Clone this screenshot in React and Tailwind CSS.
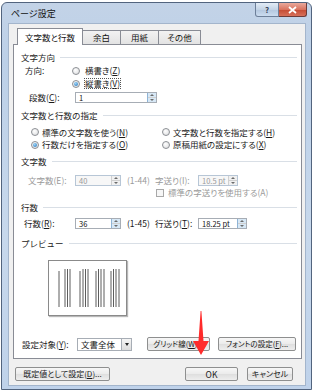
import React from "react";

const Radio = ({ checked }) => (
  <span className="w-[8px] h-[8px] rounded-full border border-[#8c8f94] bg-[radial-gradient(circle_at_40%_35%,#ffffff,#d9dadc)] flex items-center justify-center shrink-0">
    {checked && (
      <span className="w-[4px] h-[4px] rounded-full bg-[radial-gradient(circle_at_40%_35%,#9fd6f8,#1e6fb8)]" />
    )}
  </span>
);

const Spin = ({ hot }) => (
  <span
    className={`w-[9px] flex flex-col border-l ${
      hot ? "border-[#8fb4d6] bg-[#d7e8f6]" : "border-[#d0d0d0] bg-[#f0f0f0]"
    }`}
  >
    <span className="flex-1 flex items-center justify-center border-b border-[#d0d0d0]">
      <span className="w-0 h-0 border-l-[2px] border-r-[2px] border-b-[2px] border-l-transparent border-r-transparent border-b-[#6b6b6b]" />
    </span>
    <span className="flex-1 flex items-center justify-center">
      <span className="w-0 h-0 border-l-[2px] border-r-[2px] border-t-[2px] border-l-transparent border-r-transparent border-t-[#6b6b6b]" />
    </span>
  </span>
);

const Field = ({ value, className, disabled, hot }) => (
  <div
    className={`h-[11px] flex border ${
      disabled
        ? "border-[#b7c6d6] bg-[#f7f7f7] text-[#9a9a9a]"
        : "border-[#a7adb5] bg-white text-[#111111]"
    } ${className}`}
  >
    <span className="flex-1 pl-[3px] text-[7.5px] leading-[9px]">{value}</span>
    <Spin hot={hot} />
  </div>
);

const Group = ({ title }) => (
  <div className="h-[13px] flex items-center gap-[5px]">
    <span className="text-[#222222] [font-feature-settings:normal]">{title}</span>
    <span className="flex-1 h-px bg-[#d9dfe6]" />
  </div>
);

const Btn = ({ children, className }) => (
  <div
    className={`h-[14px] flex items-center justify-center rounded-[2px] border border-[#8e8f8f] bg-[linear-gradient(180deg,#f7f7f7,#ebebeb_50%,#dedede_51%,#eeeeee)] text-[#1a1a1a] whitespace-nowrap ${className}`}
  >
    {children}
  </div>
);

const Preview = () => {
  const lines = [
    [59, 272], [65, 270], [67.5, 270], [70, 270],
    [80, 272], [83, 270], [85.5, 270], [88, 270],
    [96, 272], [98.5, 270], [101, 270], [104, 270],
    [111, 272], [113.5, 270], [116, 270], [119, 270],
  ];
  return (
    <div className="ml-[27px] mt-[10px] w-[79px] h-[56px] border border-[#8a8a8a] bg-white shadow-[1px_1px_1px_#b8b8b8]">
      <svg width="77" height="54" viewBox="49 262 77 54">
        {lines.map(([x, y], i) => (
          <line key={i} x1={x} y1={y} x2={x} y2={308} stroke="#333" strokeWidth="0.8" />
        ))}
      </svg>
    </div>
  );
};

export default function App() {
  return (
    <div className="relative w-[315px] h-[392px] bg-white pt-[2px] pl-[1px] font-['Noto_Sans_CJK_JP','Noto_Sans_CJK_SC',sans-serif] [font-feature-settings:'palt'] text-[8.5px] leading-none">
      <div className="w-[311px] h-[388px] flex flex-col rounded-t-[6px] border border-[#52647e] bg-[linear-gradient(180deg,#c3d3e7,#bcd0e8_15%,#c7d8ec_60%,#bfd2ea)]">
        {/* title bar */}
        <div className="h-[20px] flex items-start shrink-0">
          <span className="ml-[9px] mt-[6px] text-[9px] text-[#111111]">ページ設定</span>
          <div className="ml-auto mr-[4px] flex">
            <div className="w-[24px] h-[14px] flex items-center justify-center rounded-bl-[3px] border border-t-0 border-[#6d7f99] bg-[linear-gradient(180deg,#e3ecf6,#c4d4e6_50%,#b3c6de_51%,#cbdcef)] text-[8px] text-[#39475a] font-bold">
              ?
            </div>
            <div className="w-[28px] h-[14px] flex items-center justify-center rounded-br-[3px] border border-t-0 border-l-0 border-[#6d3b38] bg-[linear-gradient(180deg,#e9a99c,#d9735f_50%,#c44a32_51%,#d7705a)]">
              <svg width="9" height="8" viewBox="0 0 9 8">
                <path d="M1 1 L8 7 M8 1 L1 7" stroke="#fff" strokeWidth="1.8" />
              </svg>
            </div>
          </div>
        </div>

        {/* body */}
        <div className="ml-[6px] mr-[5px] h-[363px] flex flex-col border border-[#a3b5cc] bg-[#f0f0f0]">
          {/* tabs */}
          <div className="mt-[4px] ml-[8px] flex items-end h-[17px] relative z-10">
            <div className="w-[66px] h-[17px] flex items-center justify-center border border-b-0 border-[#898c95] bg-white text-[#111111]">
              文字数と行数
            </div>
            <div className="w-[38px] h-[15px] flex items-center justify-center border border-l-0 border-[#898c95] bg-[linear-gradient(180deg,#f2f2f2,#e3e3e3)] text-[#111111]">
              余白
            </div>
            <div className="w-[38px] h-[15px] flex items-center justify-center border border-l-0 border-[#898c95] bg-[linear-gradient(180deg,#f2f2f2,#e3e3e3)] text-[#111111]">
              用紙
            </div>
            <div className="w-[42px] h-[15px] flex items-center justify-center border border-l-0 border-[#898c95] bg-[linear-gradient(180deg,#f2f2f2,#e3e3e3)] text-[#111111]">
              その他
            </div>
          </div>

          {/* tab panel */}
          <div className="-mt-px ml-[4px] w-[289px] h-[315px] border border-[#898c95] bg-white pl-[7px] pr-[4px] pt-[6px] flex flex-col text-[#1a1a1a]">
            <Group title="文字方向" />
            <div className="h-[13px] flex items-center">
              <span className="ml-[4px] w-[47px]">方向:</span>
              <Radio />
              <span className="ml-[5px]">
                横書き(<u>Z</u>)
              </span>
            </div>
            <div className="h-[13px] flex items-center">
              <span className="ml-[51px]" />
              <Radio checked />
              <span className="ml-[5px] outline outline-1 outline-dotted outline-[#555]">
                縦書き(<u>V</u>)
              </span>
            </div>
            <div className="h-[14px] flex items-center">
              <span className="ml-[8px] w-[46px]">
                段数(<u>C</u>):
              </span>
              <Field value="1" className="w-[82px]" hot />
            </div>

            <div className="mt-[5px]">
              <Group title="文字数と行数の指定" />
            </div>
            <div className="mt-[4px] h-[12px] flex items-center">
              <div className="ml-[10px] w-[131px] flex items-center">
                <Radio />
                <span className="ml-[3px]">
                  標準の文字数を使う(<u>N</u>)
                </span>
              </div>
              <Radio />
              <span className="ml-[3px]">
                文字数と行数を指定する(<u>H</u>)
              </span>
            </div>
            <div className="h-[13px] flex items-center">
              <div className="ml-[10px] w-[131px] flex items-center">
                <Radio checked />
                <span className="ml-[3px]">
                  行数だけを指定する(<u>O</u>)
                </span>
              </div>
              <Radio />
              <span className="ml-[3px]">
                原稿用紙の設定にする(<u>X</u>)
              </span>
            </div>

            <div className="mt-[4px]">
              <Group title="文字数" />
            </div>
            <div className="mt-[5px] h-[14px] flex items-center text-[#9a9a9a]">
              <span className="ml-[7px] w-[47px]">文字数(E):</span>
              <Field value="40" className="w-[46px]" disabled />
              <span className="ml-[6px] w-[28px]">(1-44)</span>
              <span className="w-[43px]">字送り(I):</span>
              <Field value="10.5 pt" className="w-[40px]" disabled />
            </div>
            <div className="h-[11px] flex items-center text-[#9a9a9a]">
              <span className="ml-[135px] w-[8px] h-[8px] border border-[#a8a8a8] bg-[#f6f6f6]" />
              <span className="ml-[4px]">標準の字送りを使用する(A)</span>
            </div>

            <div className="mt-[3px]">
              <Group title="行数" />
            </div>
            <div className="mt-[2px] h-[14px] flex items-center">
              <span className="ml-[3px] w-[51px]">
                行数(<u>R</u>):
              </span>
              <Field value="36" className="w-[46px]" hot />
              <span className="ml-[6px] w-[28px]">(1-45)</span>
              <span className="w-[43px]">
                行送り(<u>T</u>):
              </span>
              <Field value="18.25 pt" className="w-[49px]" hot />
            </div>

            <div className="mt-[7px]">
              <Group title="プレビュー" />
            </div>
            <Preview />

            <div className="mt-[20px] h-[16px] flex items-center">
              <span className="ml-[1px] w-[55px]">
                設定対象(<u>Y</u>):
              </span>
              <div className="w-[55px] h-[13px] flex border border-[#a7adb5] bg-white">
                <span className="flex-1 pl-[3px] leading-[11px]">文書全体</span>
                <span className="w-[10px] flex items-center justify-center border-l border-[#a7adb5] bg-[linear-gradient(180deg,#f5f5f5,#dcdcdc)]">
                  <span className="w-0 h-0 border-l-[2.5px] border-r-[2.5px] border-t-[3px] border-l-transparent border-r-transparent border-t-[#222]" />
                </span>
              </div>
              <Btn className="ml-[15px] w-[63px] text-[7.5px]">
                グリッド線(<u>W</u>)...
              </Btn>
              <Btn className="ml-[8px] w-[78px] text-[7.5px]">
                フォントの設定(<u>F</u>)...
              </Btn>
            </div>
          </div>

          {/* bottom buttons */}
          <div className="mt-[8px] flex items-center">
            <Btn className="ml-[6px] w-[95px] text-[8px]">
              既定値として設定(<u>D</u>)...
            </Btn>
            <Btn className="ml-auto w-[53px] border-[#3c7fb1] bg-[linear-gradient(180deg,#eaf6fd,#d9f0fc_50%,#bee6fd_51%,#a7d9f5)]">
              OK
            </Btn>
            <Btn className="ml-[9px] mr-[12px] w-[46px] text-[8px]">キャンセル</Btn>
          </div>
        </div>
      </div>

      {/* red arrow annotation */}
      <svg className="absolute left-[192px] top-[310px]" width="18" height="46" viewBox="0 0 18 46">
        <path d="M8.6 1 L9.4 1 L11.5 31 L17 31 L9 45 L1 31 L6.5 31 Z" fill="#ff2b2b" />
      </svg>
    </div>
  );
}
